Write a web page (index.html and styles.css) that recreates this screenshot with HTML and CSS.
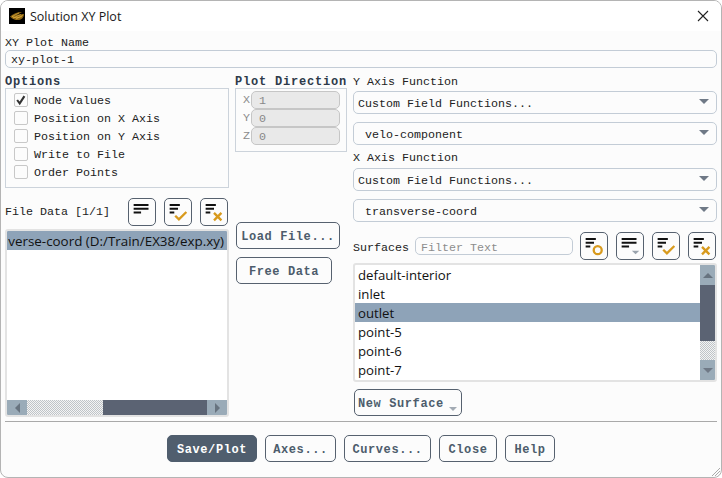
FILE: index.html
```html
<!DOCTYPE html>
<html lang="en">
<head>
<meta charset="utf-8">
<title>Solution XY Plot</title>
<link rel="stylesheet" href="styles.css">
</head>
<body>
<div class="window">
  <header class="titlebar">
    <svg class="logo" viewBox="0 0 16 16" width="16" height="16">
      <rect width="16" height="16" fill="#000"/>
      <path d="M1 8.500C4 6 8 4 13 4C11 5.500 8 6.500 5 7.500C8 7 11 6 15 6C15 9 13 11.500 10 12C7 12.500 4 11.500 1 8.500Z" fill="#8a6414"/>
      <path d="M3 8.500L10 5M4 10L12 6.500M7 11L14 7M3 8.500C6 10 9 10 13 8.500" stroke="#e0ae3e" stroke-width=".7" fill="none"/>
    </svg>
    <span class="title">Solution XY Plot</span>
    <svg class="close-x" viewBox="0 0 12 12" width="12" height="12"><path d="M1 1L11 11M11 1L1 11" stroke="#222" stroke-width="1.100" fill="none"/></svg>
  </header>
  <div class="content">
    <div class="label name-label">XY Plot Name</div>
    <div class="field name-field">xy-plot-1</div>
    <div class="columns">
      <section class="col-left">
        <div class="label bold">Options</div>
        <div class="group options">
          <label class="check"><span class="box"><svg viewBox="0 0 14 14" width="12" height="12"><path d="M2.500 7L5.500 11L11 2.500" stroke="#333" stroke-width="2.400" fill="none"/></svg></span>Node Values</label>
          <label class="check"><span class="box"></span>Position on X Axis</label>
          <label class="check"><span class="box"></span>Position on Y Axis</label>
          <label class="check"><span class="box"></span>Write to File</label>
          <label class="check"><span class="box"></span>Order Points</label>
        </div>
        <div class="file-row">
          <span class="label">File Data [1/1]</span>
          <div class="tools">
            <button class="icon-btn"><svg viewBox="0 0 28 28" width="26" height="26"><path class="ln" d="M5 6.500H21M5 10.500H21M5 14.500H13"/></svg></button>
            <button class="icon-btn"><svg viewBox="0 0 28 28" width="26" height="26"><path class="ln" d="M5 6.500H16M5 10.500H14M5 14.500H10"/><path class="gold" d="M11 18L15 22L23 14"/></svg></button>
            <button class="icon-btn"><svg viewBox="0 0 28 28" width="26" height="26"><path class="ln" d="M5 6.500H16M5 10.500H14M5 14.500H10"/><path class="gold" d="M14 15L22 23M22 15L14 23"/></svg></button>
          </div>
        </div>
        <div class="listbox file-list">
          <div class="rows">
            <div class="row selected right-clip"><span>verse-coord (D:/Train/EX38/exp.xy)</span></div>
          </div>
          <div class="hscroll">
            <span class="sb-btn"><i class="tri left"></i></span>
            <span class="track h1"></span>
            <span class="thumb h2"></span>
            <span class="sb-btn"><i class="tri right"></i></span>
          </div>
        </div>
      </section>
      <section class="col-mid">
        <div class="label bold">Plot Direction</div>
        <div class="group direction">
          <div class="dir-row"><span>X</span><div class="dir-input">1</div></div>
          <div class="dir-row"><span>Y</span><div class="dir-input">0</div></div>
          <div class="dir-row"><span>Z</span><div class="dir-input">0</div></div>
        </div>
        <button class="btn load">Load File...</button>
        <button class="btn free">Free Data</button>
      </section>
      <section class="col-right">
        <div class="label y-label">Y Axis Function</div>
        <div class="select s-first">Custom Field Functions...<i class="tri down"></i></div>
        <div class="select s-next inset">velo-component<i class="tri down"></i></div>
        <div class="label x-label">X Axis Function</div>
        <div class="select s-first2">Custom Field Functions...<i class="tri down"></i></div>
        <div class="select s-next inset">transverse-coord<i class="tri down"></i></div>
        <div class="surf-row">
          <span class="label">Surfaces</span>
          <div class="filter">Filter Text</div>
          <button class="icon-btn"><svg viewBox="0 0 28 28" width="26" height="26"><path class="ln" d="M5 6.500H16M5 10.500H14M5 14.500H10"/><circle class="gold" cx="18" cy="18.500" r="4.300"/></svg></button>
          <button class="icon-btn"><svg viewBox="0 0 28 28" width="26" height="26"><path class="ln" d="M5 6.500H21M5 10.500H21M5 14.500H13"/><path d="M16 19H24L20 23Z" fill="#9aa3ad"/></svg></button>
          <button class="icon-btn"><svg viewBox="0 0 28 28" width="26" height="26"><path class="ln" d="M5 6.500H16M5 10.500H14M5 14.500H10"/><path class="gold" d="M11 18L15 22L23 14"/></svg></button>
          <button class="icon-btn"><svg viewBox="0 0 28 28" width="26" height="26"><path class="ln" d="M5 6.500H16M5 10.500H14M5 14.500H10"/><path class="gold" d="M14 15L22 23M22 15L14 23"/></svg></button>
        </div>
        <div class="listbox surf-list">
          <div class="rows">
            <div class="row">default-interior</div>
            <div class="row">inlet</div>
            <div class="row selected">outlet</div>
            <div class="row">point-5</div>
            <div class="row">point-6</div>
            <div class="row">point-7</div>
          </div>
          <div class="vscroll">
            <span class="sb-btn"><i class="tri up"></i></span>
            <span class="thumb v1"></span>
            <span class="track v2"></span>
            <span class="sb-btn"><i class="tri down dark"></i></span>
          </div>
        </div>
        <button class="btn new-surface">New Surface<i class="tri down small"></i></button>
      </section>
    </div>
    <hr class="sep">
    <footer class="actions">
      <button class="btn primary">Save/Plot</button>
      <button class="btn">Axes...</button>
      <button class="btn">Curves...</button>
      <button class="btn">Close</button>
      <button class="btn">Help</button>
    </footer>
  </div>
  <svg class="grip" viewBox="0 0 12 12" width="12" height="12"><path d="M11 3L3 11M11 6L6 11M11 9L9 11" stroke="#aaa" stroke-width="1" fill="none"/></svg>
</div>
</body>
</html>
```
FILE: styles.css
```css
* { box-sizing: border-box; }
html, body { margin: 0; height: 100%; background: #fff; }
body { width: 722px; height: 478px; overflow: hidden; }
.window {
  position: relative;
  width: 722px; height: 478px;
  border: 1px solid #b4b4b4;
  border-radius: 8px;
  background: #fcfcfc;
  overflow: hidden;
  font-family: "Liberation Mono", monospace;
  font-size: 11.67px;
  color: #222;
}
.titlebar {
  display: flex; align-items: center;
  height: 30px;
  background: #fff;
  padding: 0 12px 0 8px;
}
.logo { flex: none; }
.title {
  font-family: "Open Sans", sans-serif;
  font-size: 12.500px;
  color: #1a1a1a;
  margin-left: 5px;
}
.close-x { margin-left: auto; }
.content { padding: 0 4px; }
.label { line-height: 14px; white-space: nowrap; }
.bold { font-weight: bold; font-size: 12px; letter-spacing: 0.8px; color: #2e3a4a; line-height: 17px; margin-bottom: -3px; }
.name-label { margin-top: 5px; }
.y-label { line-height: 16px; margin-bottom: -2px; }
.field {
  border: 1px solid #c3ccd6; border-radius: 5px;
  background: #fcfcfc;
}
.name-field { height: 18px; padding: 1px 0 0 5px; line-height: 16px; }
.columns { display: flex; gap: 6px; margin-top: 6px; }
.col-left { width: 224px; flex: none; }
.col-mid { width: 112px; flex: none; display: flex; flex-direction: column; align-items: flex-start; }
.col-right { width: 364px; flex: none; display: flex; flex-direction: column; }

.group { border: 1px solid #ccd3db; }
.options { height: 100px; padding-top: 2px; }
.check { display: flex; align-items: center; height: 18px; padding: 2px 0 0 8px; }
.box {
  width: 14px; height: 14px; flex: none;
  border: 1px solid #c8c8c8; border-radius: 2px;
  background: #fcfcfc;
  margin: -2px 6px 0 0;
  display: flex; align-items: center; justify-content: center;
}

.file-row { display: flex; align-items: center; justify-content: space-between; margin-top: 10px; height: 28px; padding-right: 1px; }
.tools { display: flex; gap: 8px; }
.icon-btn {
  width: 28px; height: 28px; padding: 0; flex: none;
  border: 1px solid #56616f; border-radius: 5px;
  background: #fcfcfc;
  display: flex; align-items: center; justify-content: center;
}
.ln { stroke: #111; stroke-width: 2; fill: none; }
.gold { stroke: #d89a1d; stroke-width: 2.500; fill: none; }

.listbox { border: 2px solid #e3e3e3; border-radius: 3px; background: #fff; display: flex; overflow: hidden; }
.file-list { height: 188px; margin-top: 3px; flex-direction: column; }
.surf-list { height: 119px; margin-top: 3px; }
.rows { flex: 1; min-width: 0; min-height: 0; overflow: hidden; font-family: "Open Sans", sans-serif; font-size: 13.200px; color: #111; }
.file-list .rows { font-size: 13.400px; }
.row { height: 19px; line-height: 21px; padding-left: 3px; white-space: nowrap; }
.selected { background: #8ea3b8; }
.right-clip { display: flex; justify-content: flex-end; padding: 0 3px 0 0; }
.right-clip span { flex: none; }
.hscroll { height: 15px; flex: none; display: flex; }
.vscroll { width: 15px; flex: none; display: flex; flex-direction: column; }
.sb-btn { flex: none; background: #9aabb8; display: flex; align-items: center; justify-content: center; }
.hscroll .sb-btn { width: 20px; }
.vscroll .sb-btn { height: 20px; }
.track { background: repeating-conic-gradient(#bfc4c8 0 25%, #f4f4f4 0 50%) 0 0 / 2px 2px; }
.thumb { background: #5b6373; }
.h1 { width: 76px; flex: none; }
.h2 { flex: 1; }
.v1 { height: 56px; flex: none; }
.v2 { flex: 1; }

.tri { display: inline-block; width: 0; height: 0; flex: none; }
.tri.left { border-top: 5px solid transparent; border-bottom: 5px solid transparent; border-right: 5px solid #67737f; }
.tri.right { border-top: 5px solid transparent; border-bottom: 5px solid transparent; border-left: 5px solid #67737f; }
.tri.up { border-left: 5px solid transparent; border-right: 5px solid transparent; border-bottom: 5px solid #67737f; }
.tri.down { border-left: 5px solid transparent; border-right: 5px solid transparent; border-top: 5px solid #6f7986; }
.tri.small { border-left-width: 4px; border-right-width: 4px; border-top-width: 4px; border-top-color: #a3abb4; margin-left: 5px; align-self: flex-end; margin-bottom: 4px; }

.direction { width: 112px; height: 64px; padding: 2px 6px 0 0; }
.dir-row { display: flex; align-items: center; height: 18px; color: #8b8b8b; }
.dir-row span { width: 15px; text-align: right; padding-right: 1px; }
.dir-input {
  flex: 1; height: 18px; line-height: 19px;
  background: #e9e9e9; border: 1px solid #c6c6c6; border-radius: 5px;
  padding-left: 7px;
  color: #888;
}

.btn {
  font-family: "Liberation Mono", monospace;
  font-weight: bold; font-size: 12px; letter-spacing: 0.6px;
  color: #4d5c6c;
  height: 27px; padding: 2px 6px 0;
  border: 1px solid #56616f; border-radius: 5px;
  background: #fcfcfc;
  display: inline-flex; align-items: center; justify-content: center;
  white-space: nowrap;
}
.load { width: 104px; margin: 70px 0 0 1px; }
.free { width: 96px; margin: 8px 0 0 1px; }
.new-surface { width: 108px; margin: 7px 0 0 1px; justify-content: flex-start; padding: 2px 0 0 3px; }

.select {
  height: 23px;
  border: 1px solid #c3ccd6; border-radius: 5px;
  background: #fcfcfc;
  display: flex; align-items: center; justify-content: space-between;
  padding: 2px 7px 0 4px;
}
.select .tri { margin-top: -4px; }
.s-first { margin-top: 3px; }
.s-first2 { margin-top: 3px; }
.s-next { margin-top: 8px; }
.inset { padding-left: 11px; }
.x-label { margin-top: 6px; }

.surf-row { display: flex; align-items: center; gap: 8px; height: 28px; margin-top: 10px; }
.surf-row .label { width: 54px; flex: none; padding-top: 3px; }
.filter {
  width: 158px; height: 18px; flex: none;
  border: 1px solid #c3ccd6; border-radius: 5px;
  color: #8d8d8d; line-height: 20px; padding-left: 5px;
  margin-right: -1px;
}

.sep { border: 0; height: 1px; background: #a9a9a9; margin: 4px 0 0 0; width: 712px; }
.actions { display: flex; justify-content: flex-start; gap: 8px; margin-top: 13px; padding-left: 162px; }
.actions .btn:nth-child(2) { width: 71px; }
.actions .btn:nth-child(3) { width: 87px; }
.actions .btn:nth-child(4) { width: 58px; }
.actions .btn:nth-child(5) { width: 50px; }
.primary { width: 90px; background: #505e6e; color: #fff; border-color: #505e6e; }
.grip { position: absolute; right: 0; bottom: 0; }
```
